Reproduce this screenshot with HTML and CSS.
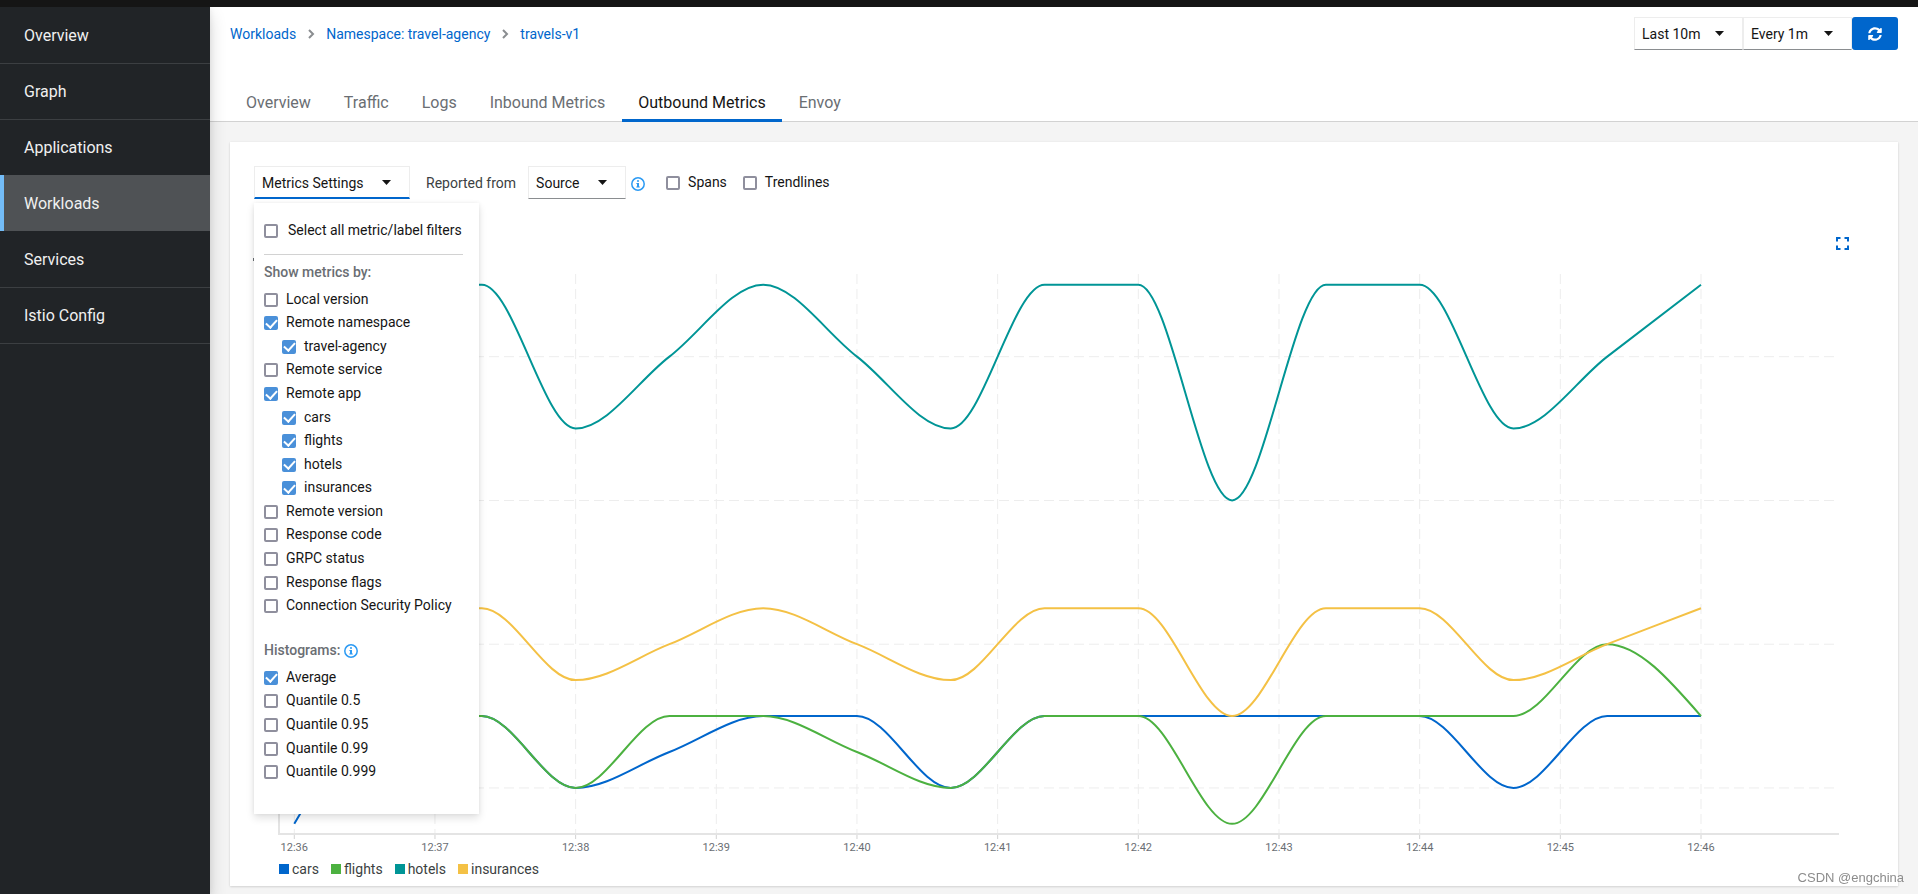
FILE: index.html
```
<!DOCTYPE html>
<html lang="en">
<head>
<meta charset="utf-8">
<meta name="viewport" content="width=device-width, initial-scale=1">
<title>travels-v1 - Outbound Metrics</title>
<link rel="stylesheet" href="styles.css">
</head>
<body>
<div class="masthead"></div>
<div class="page">
  <nav class="sidebar" aria-label="Main">
    <a class="nav-link" href="#">Overview</a>
    <a class="nav-link" href="#">Graph</a>
    <a class="nav-link" href="#">Applications</a>
    <a class="nav-link current" href="#" aria-current="page">Workloads</a>
    <a class="nav-link" href="#">Services</a>
    <a class="nav-link" href="#">Istio Config</a>
  </nav>

  <main class="main">
    <header class="page-head">
      <div class="head-row">
        <nav class="breadcrumb" aria-label="Breadcrumb">
          <a href="#">Workloads</a>
          <svg class="chevron" viewBox="0 0 8 12" aria-hidden="true"><path d="M2 2l4 4-4 4"/></svg>
          <a href="#">Namespace: travel-agency</a>
          <svg class="chevron" viewBox="0 0 8 12" aria-hidden="true"><path d="M2 2l4 4-4 4"/></svg>
          <a href="#">travels-v1</a>
        </nav>
        <div class="refresh">
          <span class="select-box">
            <select class="select range" aria-label="Time range"><option>Last 10m</option></select>
            <svg class="caret" viewBox="0 0 9 5" aria-hidden="true"><path d="M0 0h9L4.500 5z"/></svg>
          </span>
          <span class="select-box">
            <select class="select range" aria-label="Refresh interval"><option>Every 1m</option></select>
            <svg class="caret" viewBox="0 0 9 5" aria-hidden="true"><path d="M0 0h9L4.500 5z"/></svg>
          </span>
          <button class="refresh-btn" type="button" aria-label="Refresh">
            <svg viewBox="0 0 512 512" aria-hidden="true"><path d="M370.72 133.28C339.458 104.008 298.888 87.962 255.848 88c-77.458.068-144.328 53.178-162.791 126.85-1.344 5.363-6.122 9.15-11.651 9.15H24.103c-7.498 0-13.194-6.807-11.807-14.176C33.933 94.924 134.813 8 256 8c66.448 0 126.791 26.136 171.315 68.685L463.03 40.97C478.149 25.851 504 36.559 504 57.941V192c0 13.255-10.745 24-24 24H345.941c-21.382 0-32.09-25.851-16.971-40.971l41.75-41.749zM32 296h134.059c21.382 0 32.09 25.851 16.971 40.971l-41.75 41.75c31.262 29.273 71.835 45.319 114.876 45.28 77.418-.07 144.315-53.144 162.787-126.849 1.344-5.363 6.122-9.15 11.651-9.15h57.304c7.498 0 13.194 6.807 11.807 14.176C478.067 417.076 377.187 504 256 504c-66.448 0-126.791-26.136-171.315-68.685L48.97 471.03C33.851 486.149 8 475.441 8 454.059V320c0-13.255 10.745-24 24-24z"/></svg>
          </button>
        </div>
      </div>
      <div class="tabs" role="tablist">
        <button class="tab" type="button" role="tab">Overview</button>
        <button class="tab" type="button" role="tab">Traffic</button>
        <button class="tab" type="button" role="tab">Logs</button>
        <button class="tab" type="button" role="tab">Inbound Metrics</button>
        <button class="tab active" type="button" role="tab" aria-selected="true">Outbound Metrics</button>
        <button class="tab" type="button" role="tab">Envoy</button>
      </div>
    </header>

    <section class="card">
      <div class="toolbar">
        <div class="settings">
          <button class="settings-toggle" type="button" aria-expanded="true">Metrics Settings
            <svg class="caret" viewBox="0 0 9 5" aria-hidden="true"><path d="M0 0h9L4.500 5z"/></svg>
          </button>
          <div class="panel">
            <label class="select-all"><input type="checkbox" class="check">Select all metric/label filters</label>
            <hr class="rule">
            <h2 class="panel-title">Show metrics by:</h2>
            <ul class="options labels">
              <li><label class="option"><input type="checkbox" class="check"><span>Local version</span></label></li>
              <li><label class="option"><input type="checkbox" class="check" checked><span>Remote namespace</span></label></li>
              <li class="nested"><label class="option"><input type="checkbox" class="check" checked><span>travel-agency</span></label></li>
              <li><label class="option"><input type="checkbox" class="check"><span>Remote service</span></label></li>
              <li><label class="option"><input type="checkbox" class="check" checked><span>Remote app</span></label></li>
              <li class="nested"><label class="option"><input type="checkbox" class="check" checked><span>cars</span></label></li>
              <li class="nested"><label class="option"><input type="checkbox" class="check" checked><span>flights</span></label></li>
              <li class="nested"><label class="option"><input type="checkbox" class="check" checked><span>hotels</span></label></li>
              <li class="nested"><label class="option"><input type="checkbox" class="check" checked><span>insurances</span></label></li>
              <li><label class="option"><input type="checkbox" class="check"><span>Remote version</span></label></li>
              <li><label class="option"><input type="checkbox" class="check"><span>Response code</span></label></li>
              <li><label class="option"><input type="checkbox" class="check"><span>GRPC status</span></label></li>
              <li><label class="option"><input type="checkbox" class="check"><span>Response flags</span></label></li>
              <li><label class="option"><input type="checkbox" class="check"><span>Connection Security Policy</span></label></li>
            </ul>
            <h2 class="panel-title histograms">Histograms:
              <svg class="info" viewBox="0 0 14 14" aria-hidden="true"><circle cx="7" cy="7" r="6.200"/><path d="M6 3.200h2v1.600H6zM5.400 6H8v3.600h.8v1H5.300v-1H6V7h-.6z"/></svg>
            </h2>
            <ul class="options quantiles">
              <li><label class="option"><input type="checkbox" class="check" checked><span>Average</span></label></li>
              <li><label class="option"><input type="checkbox" class="check"><span>Quantile 0.5</span></label></li>
              <li><label class="option"><input type="checkbox" class="check"><span>Quantile 0.95</span></label></li>
              <li><label class="option"><input type="checkbox" class="check"><span>Quantile 0.99</span></label></li>
              <li><label class="option"><input type="checkbox" class="check"><span>Quantile 0.999</span></label></li>
            </ul>
          </div>
        </div>
        <label class="reported" for="reporter">Reported from</label>
        <span class="select-box">
          <select class="select source" id="reporter"><option>Source</option></select>
          <svg class="caret" viewBox="0 0 9 5" aria-hidden="true"><path d="M0 0h9L4.500 5z"/></svg>
        </span>
        <svg class="info reporter-info" viewBox="0 0 14 14" aria-hidden="true"><circle cx="7" cy="7" r="6.200"/><path d="M6 3.200h2v1.600H6zM5.400 6H8v3.600h.8v1H5.300v-1H6V7h-.6z"/></svg>
        <label class="toggle"><input type="checkbox" class="check">Spans</label>
        <label class="toggle"><input type="checkbox" class="check">Trendlines</label>
      </div>

      <div class="chart-head">
        <button class="expand" type="button" aria-label="Expand chart">
          <svg viewBox="0 0 13 13" aria-hidden="true"><path d="M1 4.500V1h3.500M8.500 1H12v3.500M12 8.500V12H8.500M4.500 12H1V8.500"/></svg>
        </button>
      </div>
      <svg class="chart" id="chart" viewBox="0 0 1620 599" role="img" aria-label="Request duration by remote app"></svg>
      <ul class="legend">
        <li><i class="swatch cars"></i>cars</li>
        <li><i class="swatch flights"></i>flights</li>
        <li><i class="swatch hotels"></i>hotels</li>
        <li><i class="swatch insurances"></i>insurances</li>
      </ul>
    </section>
  </main>
</div>
<div class="watermark">CSDN @engchina</div>
<script src="chart.js"></script>
</body>
</html>
```
FILE: chart.js
```
const svg = document.getElementById('chart');
const X0 = 40.3, MINUTE = 140.67, STEP = MINUTE * 2 / 3;
const AXIS_Y = 574, GRID_TOP = 14, UNIT = 71.88, ZERO_Y = 599.8;

// First sample index and values, in half grid steps.
const series = {
  cars:       [0, [0.5, 2, 2, 1, 1.5, 2, 2, 1, 2, 2, 2, 2, 2, 1, 2, 2]],
  flights:    [1, [2, 2, 1, 2, 2, 1.5, 1, 2, 2, 0.5, 2, 2, 2, 3, 2]],
  hotels:     [1, [8, 8, 6, 7, 8, 7, 6, 8, 8, 5, 8, 8, 6, 7, 8]],
  insurances: [1, [3.5, 3.5, 2.5, 3, 3.5, 3, 2.5, 3.5, 3.5, 2, 3.5, 3.5, 2.5, 3, 3.5]]
};

function add(name, attrs, text) {
  const el = document.createElementNS('http://www.w3.org/2000/svg', name);
  for (const key in attrs) el.setAttribute(key, attrs[key]);
  if (text) el.textContent = text;
  svg.appendChild(el);
}

// Monotone cubic interpolation over evenly spaced points.
function curve(points) {
  const n = points.length;
  const slope = i => (points[i + 1][1] - points[i][1]) / STEP;
  const tan = [];
  for (let i = 1; i < n - 1; i++) {
    const a = slope(i - 1), b = slope(i);
    tan[i] = (Math.sign(a) + Math.sign(b)) * Math.min(Math.abs(a), Math.abs(b), Math.abs(a + b) / 4);
  }
  tan[0] = (3 * slope(0) - tan[1]) / 2;
  tan[n - 1] = (3 * slope(n - 2) - tan[n - 2]) / 2;
  let d = 'M' + points[0].join(' ');
  const h = STEP / 3;
  for (let i = 0; i < n - 1; i++) {
    const [x, y] = points[i], [u, v] = points[i + 1];
    d += `C${x + h} ${y + h * tan[i]} ${u - h} ${v - h * tan[i + 1]} ${u} ${v}`;
  }
  return d;
}

for (let i = 0; i < 4; i++) {
  const y = 96.7 + i * 143.76;
  add('line', { class: 'grid', x1: 25, x2: 1581, y1: y, y2: y, 'stroke-dasharray': '10 5' });
}
for (let i = 0; i <= 10; i++) {
  const x = X0 + i * MINUTE;
  add('line', { class: 'grid', x1: x, x2: x, y1: GRID_TOP, y2: AXIS_Y, 'stroke-dasharray': '10 5' });
  add('line', { class: 'tick', x1: x, x2: x, y1: AXIS_Y, y2: AXIS_Y + 5 });
  add('text', { class: 'tick-label', x: x, y: AXIS_Y + 17 }, '12:' + (36 + i));
}
add('path', { class: 'axis', d: `M25 ${GRID_TOP}V${AXIS_Y}H1585` });
add('rect', { class: 'axis-mark', x: -1, y: -2, width: 3, height: 3 });

for (const name in series) {
  const [start, values] = series[name];
  const points = values.map((v, i) => [X0 + (start + i) * STEP, ZERO_Y - v * UNIT]);
  add('path', { class: 'line ' + name, d: curve(points) });
}
```
FILE: styles.css
```
* {
  box-sizing: border-box;
}

body {
  margin: 0;
  min-height: 100vh;
  display: flex;
  flex-direction: column;
  background: #f4f4f4;
  color: #151515;
  font: 14px/21px Roboto, "Liberation Sans", sans-serif;
}

button,
select {
  font: inherit;
  color: inherit;
}

ul {
  list-style: none;
  margin: 0;
  padding: 0;
}

.masthead {
  height: 7px;
  background: #151515;
  position: relative;
  z-index: 3;
}

.page {
  flex: 1;
  display: flex;
}

/* Sidebar */
.sidebar {
  width: 210px;
  flex: none;
  background: #212427;
  box-shadow: 0 8px 16px rgba(3, 3, 3, 0.16), 0 0 6px rgba(3, 3, 3, 0.08);
  position: relative;
  z-index: 2;
}

.nav-link {
  display: flex;
  align-items: center;
  height: 56px;
  padding: 0 24px;
  border-top: 1px solid #3c3f42;
  color: #f0f0f0;
  font-size: 16px;
  text-decoration: none;
}

.nav-link:first-child {
  border-top-color: transparent;
}

.nav-link:last-child {
  height: 57px;
  border-bottom: 1px solid #3c3f42;
}

.nav-link.current {
  padding-left: 20px;
  border-top: 0;
  border-left: 4px solid #73bcf7;
  background: #4f5255;
}

.nav-link.current + .nav-link {
  border-top-color: transparent;
}

/* Header */
.main {
  flex: 1;
  min-width: 0;
}

.page-head {
  background: #fff;
  border-bottom: 1px solid #d2d2d2;
}

.head-row {
  display: flex;
  justify-content: space-between;
  align-items: flex-start;
  padding: 10px 20px 32px;
}

.breadcrumb {
  display: flex;
  align-items: center;
  height: 33px;
  gap: 11px;
}

.breadcrumb a {
  padding-top: 2px;
  color: #0066cc;
  text-decoration: none;
}

.chevron {
  width: 8px;
  height: 12px;
  fill: none;
  stroke: #8a8d90;
  stroke-width: 2;
}

.refresh {
  display: flex;
}

.select-box {
  position: relative;
  display: flex;
}

.select,
.settings-toggle {
  height: 33px;
  margin: 0;
  padding: 2px 7px 0;
  appearance: none;
  background: #fff;
  border: 1px solid #ededed;
  border-bottom-color: #8a8d90;
  border-radius: 0;
  text-align: left;
}

.range {
  width: 109px;
}

.source {
  width: 98px;
}

.caret {
  position: absolute;
  right: 19px;
  top: 14px;
  width: 9px;
  height: 5px;
  fill: #151515;
  pointer-events: none;
}

.refresh-btn {
  display: grid;
  place-items: center;
  width: 46px;
  height: 33px;
  padding: 0;
  border: 0;
  border-radius: 3px;
  background: #0066cc;
}

.refresh-btn svg {
  width: 14px;
  height: 14px;
  fill: #fff;
}

.tabs {
  display: flex;
  gap: 1px;
  height: 39px;
  padding: 0 20px;
}

.tab {
  padding: 4px 16px 0;
  border: 0;
  border-bottom: 3px solid transparent;
  margin-bottom: -1px;
  background: none;
  color: #6a6e73;
  font-size: 16px;
}

.tab.active {
  color: #151515;
  border-bottom-color: #0066cc;
}

/* Card */
.card {
  margin: 20px 20px 8px;
  padding: 24px 24px 7px;
  background: #fff;
  box-shadow: 0 1px 2px rgba(3, 3, 3, 0.12), 0 0 2px rgba(3, 3, 3, 0.06);
}

.toolbar {
  display: flex;
  align-items: center;
}

.settings {
  position: relative;
}

.settings-toggle {
  display: block;
  width: 156px;
  border-bottom: 2px solid #0066cc;
}

.reported {
  margin: 0 12px 0 16px;
  padding-top: 2px;
  color: #3c3f42;
}

.info {
  width: 14px;
  height: 14px;
  fill: #2b9af3;
}

.info circle {
  fill: none;
  stroke: #2b9af3;
  stroke-width: 1.500;
}

.reporter-info {
  margin: 2px 21px 0 5px;
}

.toggle {
  display: flex;
  align-items: center;
  gap: 8px;
  margin-right: 16px;
}

.check {
  appearance: none;
  flex: none;
  width: 14px;
  height: 14px;
  margin: 0;
  border: 2px solid #8f8f9d;
  border-radius: 2px;
  background: #fff;
}

.check:checked {
  border: 0;
  display: grid;
  place-items: center;
  background: #4a90d9;
}

.check:checked::before {
  content: "";
  width: 9px;
  height: 5px;
  margin-top: -2px;
  border: solid #fff;
  border-width: 0 0 2px 2px;
  transform: rotate(-48deg);
}

/* Settings panel */
.panel {
  position: absolute;
  z-index: 1;
  top: 37px;
  left: 0;
  width: 225px;
  padding: 17px 16px 30px 10px;
  background: #fff;
  box-shadow: 0 4px 8px rgba(3, 3, 3, 0.12), 0 0 4px rgba(3, 3, 3, 0.06);
}

.select-all {
  display: flex;
  align-items: center;
  gap: 10px;
  white-space: nowrap;
}

.rule {
  height: 1px;
  margin: 13px 0 7px;
  border: 0;
  background: #d2d2d2;
}

.panel-title {
  display: flex;
  align-items: center;
  gap: 4px;
  margin: 0 0 5px;
  color: #6a6e73;
  font-size: 14px;
  font-weight: 500;
}

.panel-title.histograms {
  margin-top: 22px;
}

.options {
  display: grid;
  grid-auto-rows: 1fr;
  line-height: 20px;
}

.labels {
  height: 330px;
}

.quantiles {
  height: 118px;
}

.nested {
  padding-left: 18px;
}

.option {
  display: flex;
  align-items: center;
  gap: 8px;
  height: 100%;
}

.option span {
  padding-bottom: 2px;
}

/* Chart */
.chart-head {
  display: flex;
  justify-content: flex-end;
  padding: 34px 22px 7px 0;
}

.expand {
  display: grid;
  place-items: center;
  width: 20px;
  height: 20px;
  padding: 0;
  border: 0;
  background: none;
}

.expand svg {
  width: 13px;
  height: 13px;
  fill: none;
  stroke: #0066cc;
  stroke-width: 2;
}

.chart {
  display: block;
  width: 100%;
  overflow: visible;
}

.grid {
  stroke: #ededed;
}

.tick {
  stroke: #d2d2d2;
}

.tick-label {
  fill: #6a6e73;
  font-size: 11px;
  text-anchor: middle;
}

.axis {
  fill: none;
  stroke: #e4e4e4;
  stroke-width: 2;
}

.axis-mark {
  fill: #6a6e73;
}

.line {
  fill: none;
  stroke-width: 2;
}

.line.cars { stroke: #0066cc; }
.line.flights { stroke: #4cb140; }
.line.hotels { stroke: #009596; }
.line.insurances { stroke: #f4c145; }

.legend {
  display: flex;
  gap: 12px;
  padding-left: 25px;
  line-height: 20px;
  color: #3c3f42;
}

.legend li {
  display: flex;
  align-items: center;
  gap: 3px;
}

.swatch {
  width: 10px;
  height: 10px;
}

.swatch.cars { background: #0066cc; }
.swatch.flights { background: #4cb140; }
.swatch.hotels { background: #009596; }
.swatch.insurances { background: #f4c145; }

.watermark {
  position: fixed;
  right: 14px;
  bottom: 6px;
  color: #8c8c8c;
  font-family: "Liberation Sans", Arial, sans-serif;
  font-size: 13px;
  text-shadow: 0 0 1px #fff;
}
```
